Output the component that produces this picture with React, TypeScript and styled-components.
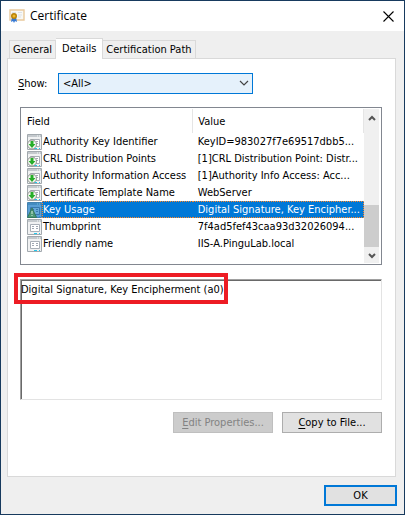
import React from "react";
import styled, { createGlobalStyle, css } from "styled-components";

const GlobalStyle = createGlobalStyle`
  *, *::before, *::after { box-sizing: border-box; }
  body { margin: 0; background: #173a5e; }
  body, button, select, textarea {
    font-family: "DejaVu Sans Condensed", "Noto Sans", sans-serif;
    font-size: 11px;
    line-height: 15px;
    color: #000;
  }
`;

const Dialog = styled.main`
  display: flex;
  flex-direction: column;
  min-height: 100vh;
  border: 1px solid #173a5e;
  background: #efefef;
`;

const TitleBar = styled.header`
  display: flex;
  align-items: center;
  height: 30px;
  padding: 0 10px 0 8px;
  gap: 5px;
  background: #fff;
`;

const Title = styled.h1`
  flex: 1;
  margin: 0;
  font: 400 12px/16px "Open Sans", "Noto Sans", sans-serif;
`;

const CloseButton = styled.button`
  display: flex;
  padding: 0;
  border: 0;
  background: none;
`;

const Content = styled.div`
  display: flex;
  flex: 1;
  flex-direction: column;
  padding: 7px 7px 8px 6px;
`;

const Tabs = styled.div`
  display: flex;
  align-items: flex-end;
  height: 21px;
  padding-left: 2px;
  margin-bottom: -1px;
`;

const Tab = styled.button<{ $active?: boolean }>`
  height: 19px;
  padding: 0 3px;
  border: 1px solid #d9d9d9;
  background: #efefef;
  white-space: nowrap;
  line-height: 17px;
  & + & { border-left: 0; }
  ${(p) =>
    p.$active &&
    css`
      position: relative;
      height: 21px;
      padding: 0 6px 2px;
      border-bottom: 0;
      background: #fff;
    `}
`;

const Panel = styled.section`
  display: flex;
  flex: 1;
  flex-direction: column;
  margin-right: 1px;
  padding: 14px 13px 43px 12px;
  border: 1px solid #d9d9d9;
  background: #fff;
`;

const ShowRow = styled.div`
  display: flex;
  align-items: center;
  height: 21px;
  margin-bottom: 13px;
`;

const ShowLabel = styled.label`
  width: 38px;
  margin-left: -2px;
  padding-right: 2px;
`;

const SelectBox = styled.div`
  position: relative;
  width: 195px;
  margin-left: 2px;
  svg { position: absolute; right: 4px; top: 7px; pointer-events: none; }
`;

const Select = styled.select`
  display: block;
  width: 100%;
  height: 21px;
  padding: 0 4px;
  border: 1px solid #0078d7;
  border-radius: 0;
  background: #e5f1fb;
  appearance: none;
`;

const ListBox = styled.div`
  display: flex;
  height: 158px;
  margin-bottom: 14px;
  border: 1px solid #828790;
  padding: 1px;
`;

const FieldTable = styled.table`
  width: 100%;
  border-collapse: collapse;
  table-layout: fixed;
`;

const TableWrap = styled.div`
  flex: 1;
  min-width: 0;
`;

const HeadCell = styled.th<{ $width?: string }>`
  width: ${(p) => p.$width ?? "auto"};
  height: 24px;
  padding: 0 5px;
  border-right: 1px solid #e5e5e5;
  font-weight: 400;
  text-align: left;
`;

const Row = styled.tr<{ $selected?: boolean }>`
  height: 17px;
  ${(p) => p.$selected && css`color: #fff;`}
`;

const Cell = styled.td<{ $selected?: boolean }>`
  height: 17px;
  padding: 0;
  overflow: hidden;
  ${(p) =>
    p.$selected &&
    css`
      &:last-child span { border-right: 1px dotted #ff8728; }
      &:first-child span { border-left: 1px dotted #ff8728; }
    `}
`;

const CellInner = styled.div`
  display: flex;
  align-items: center;
  height: 17px;
  svg { flex: none; margin: 0 0 0 5px; }
`;

const CellText = styled.span<{ $selected?: boolean; $value?: boolean }>`
  flex: 1;
  height: 17px;
  padding-left: ${(p) => (p.$value ? "5px" : "1px")};
  line-height: 17px;
  overflow: hidden;
  white-space: nowrap;
  ${(p) =>
    p.$selected &&
    css`
      padding-left: ${p.$value ? "5px" : "0"};
      background: #0078d7;
      line-height: 15px;
      border-top: 1px dotted #ff8728;
      border-bottom: 1px dotted #ff8728;
    `}
`;

const ScrollBar = styled.div`
  display: flex;
  flex-direction: column;
  align-items: center;
  width: 15px;
  margin-right: 1px;
  padding: 6px 0 4px;
  background: #f0f0f0;
`;

const Thumb = styled.div`
  width: 15px;
  height: 42px;
  margin: auto 0 6px;
  background: #cdcdcd;
`;

const DetailBox = styled.div`
  position: relative;
  display: flex;
  flex: 1;
  min-height: 121px;
  margin-bottom: 12px;
`;

const DetailText = styled.textarea`
  flex: 1;
  min-width: 0;
  padding: 1px 0;
  border: 1px solid #a0a0a0;
  border-right-color: #e3e3e3;
  border-bottom-color: #e3e3e3;
  border-radius: 0;
  box-shadow: inset 1px 1px #696969;
  line-height: 17px;
  resize: none;
  outline: 0;
`;

const Highlight = styled.div`
  position: absolute;
  left: -6px;
  top: -6px;
  width: 214px;
  height: 31px;
  border: 4px solid #ed1c24;
  pointer-events: none;
`;

const Actions = styled.div`
  display: flex;
  justify-content: flex-end;
  gap: 9px;
`;

const PushButton = styled.button<{ $primary?: boolean }>`
  width: ${(p) => (p.$primary ? "73px" : "100px")};
  height: 21px;
  padding: 0;
  border: ${(p) => (p.$primary ? "2px solid #0078d7" : "1px solid #adadad")};
  background: #e1e1e1;
  &:disabled { border-color: #bfbfbf; background: #ccc; color: #838383; }
`;

const Footer = styled.footer`
  display: flex;
  justify-content: flex-end;
  padding-top: 8px;
`;

const Key = styled.span`
  text-decoration: underline;
  text-underline-offset: 2px;
`;

function CertificateIcon() {
  return (
    <svg width="16" height="14" viewBox="0 0 16 14" aria-hidden="true">
      <path d="M1 1h14v10H1z" fill="#f8f8f5" stroke="#e9c99c" strokeWidth="1.4" />
      <path d="M3 3.5h4M9 3.5h4M9 6h4M9 8h3" stroke="#dce1e7" />
      <path d="M3 8 2 13l2-1 1 2 1-2 2 1-1-5" fill="#3478d4" />
      <circle cx="5" cy="7" r="3" fill="#b98208" />
      <circle cx="5" cy="7" r="1.5" fill="#edb82c" />
    </svg>
  );
}

type Kind = "extension" | "critical" | "property";

function FieldIcon({ kind }: { kind: Kind }) {
  const tint = kind === "critical";
  return (
    <svg width="15" height="16" viewBox="0 0 15 16" aria-hidden="true">
      <path d="M.5.5h14v15H.5z" fill={tint ? "#5a9fd5" : "#f0f1f2"} stroke={tint ? "#4381af" : "#a2a9ae"} />
      <path d="M1 1h13v2H1z" fill={tint ? "#438bc0" : "#c4c9cd"} />
      <path d="M10 2h1M12 2h1" stroke={tint ? "#72bddf" : "#f5fafa"} />
      <path d="M3.5 5.5h9v7h-9zM7.5 5.5h1" fill={tint ? "#67a9d9" : "#fff"} stroke={tint ? "#3878ad" : "#a9afb7"} />
      <path d="M5 7.5h2M9 7.5h2M5 9.5h2M9 9.5h2" stroke={tint ? "#3878ad" : "#a0a7b2"} />
      <path d="M7 14.5h3M12 14.5h1" stroke={tint ? "#279bdd" : "#20c8ed"} />
      {kind === "extension" && (
        <>
          <circle cx="5" cy="10.5" r="4.5" fill="#f6f8f5" stroke="#8b918a" />
          <path d="M3.5 7h3v3h2L5 14l-3.5-4h2z" fill="#27ad29" />
        </>
      )}
      {tint && (
        <>
          <path d="M5 6l4.5 9.5h-9z" fill="#4b9874" stroke="#36785e" />
          <path d="M5 9v3M5 13v1" stroke="#d5ece1" />
        </>
      )}
    </svg>
  );
}

function ScrollArrow({ down }: { down?: boolean }) {
  return (
    <svg width="8" height="6" viewBox="0 0 8 6" aria-hidden="true">
      <path d={down ? "M1 1l3 3 3-3" : "M1 5l3-3 3 3"} fill="none" stroke="#555" strokeWidth="2" />
    </svg>
  );
}

const fields: { name: string; value: string; kind: Kind; selected?: boolean }[] = [
  { name: "Authority Key Identifier", value: "KeyID=983027f7e69517dbb5...", kind: "extension" },
  { name: "CRL Distribution Points", value: "[1]CRL Distribution Point: Distr...", kind: "extension" },
  { name: "Authority Information Access", value: "[1]Authority Info Access: Acc...", kind: "extension" },
  { name: "Certificate Template Name", value: "WebServer", kind: "extension" },
  { name: "Key Usage", value: "Digital Signature, Key Encipher...", kind: "critical", selected: true },
  { name: "Thumbprint", value: "7f4ad5fef43caa93d32026094...", kind: "property" },
  { name: "Friendly name", value: "IIS-A.PinguLab.local", kind: "property" },
];

export default function App() {
  return (
    <>
      <GlobalStyle />
      <Dialog>
        <TitleBar>
          <CertificateIcon />
          <Title>Certificate</Title>
          <CloseButton aria-label="Close">
            <svg width="11" height="11" viewBox="0 0 11 11" aria-hidden="true">
              <path d="M.5.5l10 10M10.5.5l-10 10" stroke="#000" strokeWidth="1.1" />
            </svg>
          </CloseButton>
        </TitleBar>
        <Content>
          <Tabs role="tablist">
            <Tab role="tab" aria-selected={false}>General</Tab>
            <Tab role="tab" aria-selected $active>Details</Tab>
            <Tab role="tab" aria-selected={false}>Certification Path</Tab>
          </Tabs>
          <Panel role="tabpanel">
            <ShowRow>
              <ShowLabel htmlFor="show"><Key>S</Key>how:</ShowLabel>
              <SelectBox>
                <Select id="show" defaultValue="all">
                  <option value="all">&lt;All&gt;</option>
                </Select>
                <svg width="10" height="7" viewBox="0 0 10 7" aria-hidden="true">
                  <path d="M1 1l4 4 4-4" fill="none" stroke="#444" strokeWidth="1.2" />
                </svg>
              </SelectBox>
            </ShowRow>
            <ListBox>
              <TableWrap>
                <FieldTable>
                  <thead>
                    <tr>
                      <HeadCell $width="50%">Field</HeadCell>
                      <HeadCell>Value</HeadCell>
                    </tr>
                  </thead>
                  <tbody>
                    {fields.map((f) => (
                      <Row key={f.name} $selected={f.selected}>
                        <Cell $selected={f.selected}>
                          <CellInner>
                            <FieldIcon kind={f.kind} />
                            <CellText $selected={f.selected}>{f.name}</CellText>
                          </CellInner>
                        </Cell>
                        <Cell $selected={f.selected}>
                          <CellInner>
                            <CellText $value $selected={f.selected}>{f.value}</CellText>
                          </CellInner>
                        </Cell>
                      </Row>
                    ))}
                  </tbody>
                </FieldTable>
              </TableWrap>
              <ScrollBar>
                <ScrollArrow />
                <Thumb />
                <ScrollArrow down />
              </ScrollBar>
            </ListBox>
            <DetailBox>
              <DetailText aria-label="Field value" readOnly value="Digital Signature, Key Encipherment (a0)" />
              <Highlight />
            </DetailBox>
            <Actions>
              <PushButton disabled><Key>E</Key>dit Properties...</PushButton>
              <PushButton><Key>C</Key>opy to File...</PushButton>
            </Actions>
          </Panel>
          <Footer>
            <PushButton $primary>OK</PushButton>
          </Footer>
        </Content>
      </Dialog>
    </>
  );
}
